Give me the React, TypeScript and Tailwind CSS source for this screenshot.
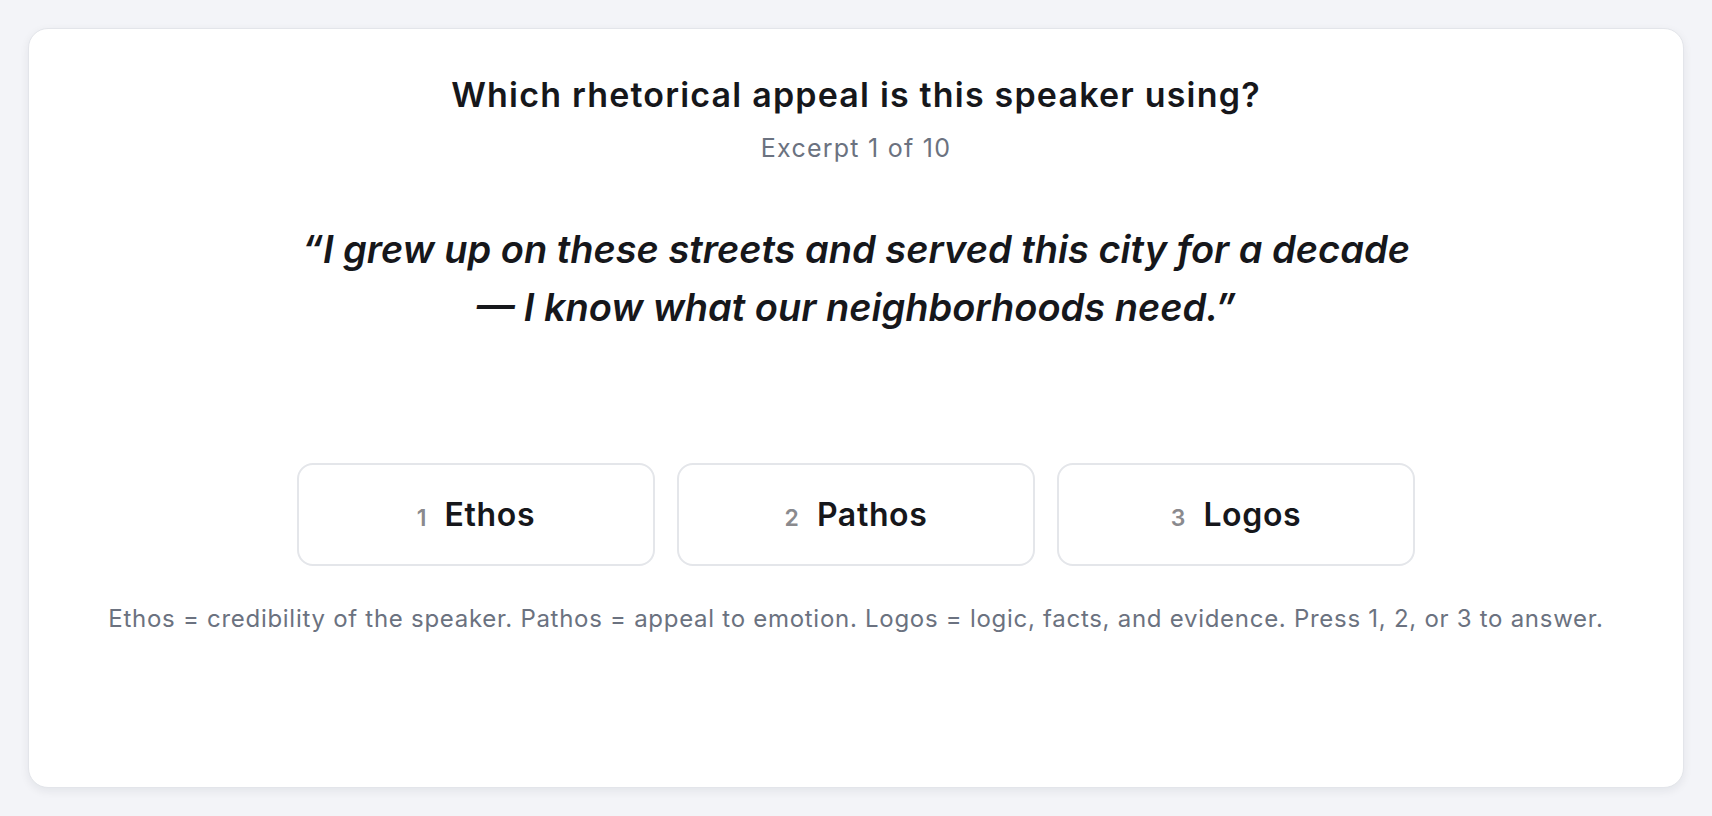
import React from 'react'

const choices = [
  { key: '1', label: 'Ethos' },
  { key: '2', label: 'Pathos' },
  { key: '3', label: 'Logos' },
]

export default function App() {
  return (
    <div
      className="min-h-screen bg-[#f3f4f8] p-[28px] flex"
      style={{ fontFamily: 'Inter, "Noto Sans", sans-serif' }}
    >
      {/* Quiz card */}
      <main className="flex-1 bg-white rounded-[20px] border border-[#e3e5ea] shadow-[0_3px_10px_rgba(15,23,42,0.07)] flex flex-col items-center pt-[45px]">
        <h1 className="text-[34px] leading-[42px] font-semibold text-[#16171b] tracking-[0.035em]">
          Which rhetorical appeal is this speaker using?
        </h1>
        <p className="mt-[16px] text-[25px] leading-[32px] text-[#6b7280] tracking-[0.05em]">Excerpt 1 of 10</p>

        <blockquote className="mt-[56px] text-center text-[38px] leading-[58px] italic font-semibold text-[#16171b]">
          “I grew up on these streets and served this city for a decade
          <br />— I know what our neighborhoods need.”
        </blockquote>

        <div className="mt-[127px] flex gap-[22px]">
          {choices.map((c) => (
            <button
              key={c.key}
              className="w-[358px] h-[103px] rounded-[16px] border-2 border-[#e4e6ea] bg-white flex items-baseline justify-center gap-[18px] pt-[26px]"
            >
              <span className="text-[23px] font-semibold text-[#8a8a8e]">{c.key}</span>
              <span className="text-[32px] font-semibold text-[#16171b] tracking-[0.02em]">{c.label}</span>
            </button>
          ))}
        </div>

        <p className="mt-[37px] text-[24px] leading-[32px] text-[#6b7280] tracking-[0.03em]">
          Ethos = credibility of the speaker. Pathos = appeal to emotion. Logos = logic, facts, and evidence. Press 1, 2, or 3 to answer.
        </p>
      </main>
    </div>
  )
}
